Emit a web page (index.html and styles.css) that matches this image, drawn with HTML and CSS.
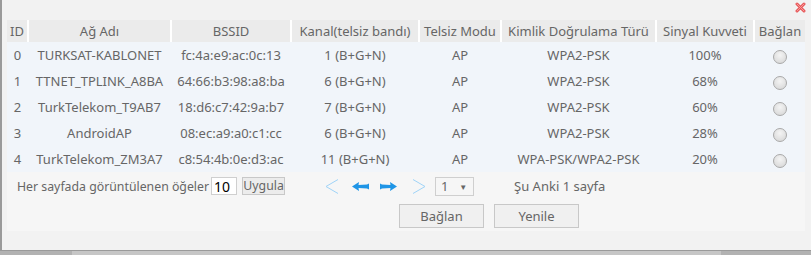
FILE: index.html
```html
<!DOCTYPE html>
<html lang="tr">
<head>
  <meta charset="UTF-8">
  <title>Kablosuz Ağlar</title>
  <link rel="stylesheet" href="styles.css">
</head>
<body>
  <div class="window">
    <!-- Kapat -->
    <svg class="close-btn" width="11" height="11" viewBox="0 0 11 11">
      <path d="M2 2 L9 9 M9 2 L2 9" stroke="#e8585a" stroke-width="3" stroke-linecap="round"/>
      <path d="M2 2 L9 9 M9 2 L2 9" stroke="#f59a9a" stroke-width="1" stroke-linecap="round"/>
    </svg>

    <div class="panel">
      <table class="ap-table">
        <colgroup>
          <col style="width: 21px">
          <col style="width: 143px">
          <col style="width: 120px">
          <col style="width: 128px">
          <col style="width: 82px">
          <col style="width: 155px">
          <col style="width: 98px">
          <col style="width: 51px">
        </colgroup>
        <thead>
          <tr>
            <th>ID</th>
            <th>Ağ Adı</th>
            <th>BSSID</th>
            <th>Kanal(telsiz bandı)</th>
            <th>Telsiz Modu</th>
            <th>Kimlik Doğrulama Türü</th>
            <th>Sinyal Kuvveti</th>
            <th>Bağlan</th>
          </tr>
        </thead>
        <tbody>
          <tr>
            <td>0</td><td>TURKSAT-KABLONET</td><td>fc:4a:e9:ac:0c:13</td><td>1 (B+G+N)</td>
            <td>AP</td><td>WPA2-PSK</td><td>100%</td><td><span class="radio"></span></td>
          </tr>
          <tr>
            <td>1</td><td>TTNET_TPLINK_A8BA</td><td>64:66:b3:98:a8:ba</td><td>6 (B+G+N)</td>
            <td>AP</td><td>WPA2-PSK</td><td>68%</td><td><span class="radio"></span></td>
          </tr>
          <tr>
            <td>2</td><td>TurkTelekom_T9AB7</td><td>18:d6:c7:42:9a:b7</td><td>7 (B+G+N)</td>
            <td>AP</td><td>WPA2-PSK</td><td>60%</td><td><span class="radio"></span></td>
          </tr>
          <tr>
            <td>3</td><td>AndroidAP</td><td>08:ec:a9:a0:c1:cc</td><td>6 (B+G+N)</td>
            <td>AP</td><td>WPA2-PSK</td><td>28%</td><td><span class="radio"></span></td>
          </tr>
          <tr>
            <td>4</td><td>TurkTelekom_ZM3A7</td><td>c8:54:4b:0e:d3:ac</td><td>11 (B+G+N)</td>
            <td>AP</td><td>WPA-PSK/WPA2-PSK</td><td>20%</td><td><span class="radio"></span></td>
          </tr>
        </tbody>
      </table>

      <div class="pager">
        <span class="pager-label">Her sayfada görüntülenen öğeler</span>
        <input class="page-size" type="text" value="10">
        <button class="btn-apply">Uygula</button>

        <div class="pager-nav">
          <svg class="nav-first" width="14" height="15" viewBox="0 0 14 15">
            <path d="M13 0.5 L1 7.5 L13 14.5" fill="none" stroke="#9fd3f7" stroke-width="1"/>
          </svg>
          <svg class="nav-prev" width="17" height="9" viewBox="0 0 17 9">
            <path d="M0 4.5 L7 0 L6.5 3 L15 2.5 L17 1.5 L17 7.5 L15 6.5 L6.5 6 L7 9 Z" fill="#1f95e6"/>
          </svg>
          <svg class="nav-next" width="17" height="9" viewBox="0 0 17 9">
            <path d="M17 4.5 L10 0 L10.5 3 L2 2.5 L0 1.5 L0 7.5 L2 6.5 L10.5 6 L10 9 Z" fill="#1f95e6"/>
          </svg>
          <svg class="nav-last" width="14" height="15" viewBox="0 0 14 15">
            <path d="M1 0.5 L13 7.5 L1 14.5" fill="none" stroke="#9fd3f7" stroke-width="1"/>
          </svg>
        </div>

        <div class="page-select">
          <span>1</span>
          <span class="caret">&#9660;</span>
        </div>
        <span class="page-info">Şu Anki 1 sayfa</span>
      </div>

      <div class="actions">
        <button class="btn">Bağlan</button>
        <button class="btn">Yenile</button>
      </div>
    </div>
  </div>
  <div class="scrollbar"><div class="scroll-thumb"></div></div>
</body>
</html>
```

FILE: styles.css
```css
body {
  margin: 0;
  background-color: #f2f2f2;
  font-family: "Noto Sans", "Open Sans", sans-serif;
  font-size: 13px;
  color: #666;
  overflow: hidden;
}
.window {
  position: relative;
  height: 251px;
  box-sizing: border-box;
  padding: 20px 6px 0 5px;
  border-left: 2px solid #9a9a9a;
  border-bottom: 1px solid #9a9a9a;
}
.close-btn {
  position: absolute;
  top: 2px;
  right: 5px;
}
.panel {
  background-color: #f6f6f6;
  height: 211px;
}
.ap-table {
  width: 798px;
  border-collapse: collapse;
  table-layout: fixed;
}
.ap-table th {
  height: 22px;
  padding: 0;
  font-weight: normal;
  background-color: #ebebeb;
  border-left: 2px solid #fff;
  white-space: nowrap;
  overflow: hidden;
}
.ap-table th:first-child {
  border-left: none;
}
.ap-table td {
  height: 26px;
  padding: 0;
  text-align: center;
  background-color: #f1f5fa;
  white-space: nowrap;
}
.radio {
  display: inline-block;
  width: 12px;
  height: 12px;
  margin-top: 2px;
  border: 1px solid #a9a9a9;
  border-radius: 50%;
  background: radial-gradient(circle at 50% 35%, #f4f4f4, #d4d4d4);
  vertical-align: middle;
}
.pager {
  display: flex;
  align-items: center;
  height: 18px;
  margin-top: 5px;
  padding-left: 10px;
}
.pager-label {
  font-size: 12.3px;
}
.page-size {
  width: 26px;
  height: 18px;
  box-sizing: border-box;
  margin: 0 0 0 2px;
  padding: 0 2px;
  border: 1px solid #cfcfcf;
  background-color: #fff;
  color: #000;
  font-family: inherit;
  font-size: 14px;
}
.btn-apply {
  width: 43px;
  height: 18px;
  margin-left: 5px;
  padding: 0;
  border: 1px solid #c8c8c8;
  background-color: #ececec;
  color: #666;
  font-family: inherit;
  font-size: 12.3px;
  line-height: 16px;
}
.pager-nav {
  display: flex;
  align-items: center;
  margin-left: 40px;
}
.nav-prev {
  margin-left: 13px;
}
.nav-next {
  margin-left: 11px;
}
.nav-last {
  margin-left: 15px;
}
.page-select {
  display: flex;
  justify-content: space-between;
  align-items: center;
  width: 39px;
  height: 19px;
  box-sizing: border-box;
  margin-left: 9px;
  padding: 0 6px 0 5px;
  border: 1px solid #cfcfcf;
}
.caret {
  font-size: 8px;
  color: #666;
}
.page-info {
  margin-left: 40px;
}
.actions {
  display: flex;
  gap: 10px;
  margin-top: 9px;
  padding-left: 392px;
}
.btn {
  width: 85px;
  height: 24px;
  border: 1px solid #c8c8c8;
  background-color: #f0f0f0;
  color: #666;
  font-family: inherit;
  font-size: 13px;
}
.scrollbar {
  height: 4px;
  background-color: #b2b2b2;
  padding-left: 72px;
  padding-right: 90px;
}
.scroll-thumb {
  height: 4px;
  background-color: #c6c6c6;
}
```
